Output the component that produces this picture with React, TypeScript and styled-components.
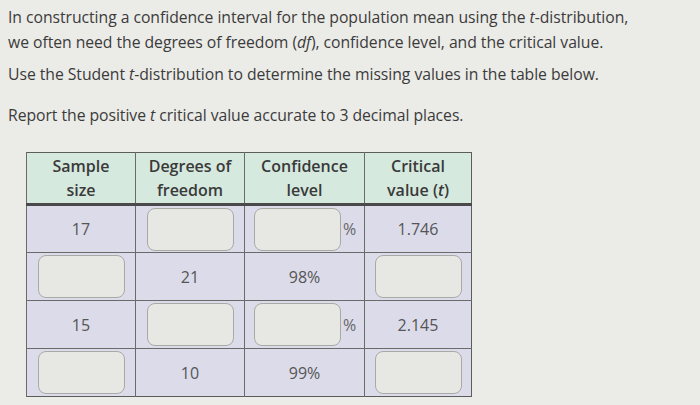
import { FC } from "react";
import styled, { createGlobalStyle } from "styled-components";

const GlobalStyle = createGlobalStyle`
  body {
    margin: 0;
    background-color: #ebebe8;
    font-family: "Open Sans", "Noto Sans", sans-serif;
    color: #3b3b3b;
  }
`;

const Wrapper = styled.div`
  width: 700px;
  height: 405px;
  padding: 5px 0 0 8px;
  box-sizing: border-box;
  overflow: hidden;
`;

const Para = styled.p<{ $gap?: number }>`
  margin: 0 0 ${(p) => p.$gap ?? 0}px 0;
  font-size: 15.75px;
  line-height: 25px;
  letter-spacing: -0.05px;
`;

const Table = styled.table`
  margin-left: 18px;
  border-collapse: collapse;
  border: 1px solid #5c5c5c;
  table-layout: fixed;
  width: 441px;
`;

const HeadCell = styled.th<{ $w: number }>`
  width: ${(p) => p.$w}px;
  height: 50px;
  padding: 0;
  background-color: #d6e9de;
  border-left: 1px solid #6a6a6a;
  border-bottom: 3px solid #4a4a4a;
  font-size: 16px;
  line-height: 24px;
  font-weight: 600;
  color: #3a3a3a;
  text-align: center;
`;

const Row = styled.tr`
  height: 48px;
`;

const Cell = styled.td`
  padding: 0;
  background-color: #dcdbea;
  border-left: 1px solid #6a6a6a;
  border-top: 1px solid #6a6a6a;
  font-size: 16px;
  color: #555;
  text-align: center;
  vertical-align: middle;
`;

const PctWrap = styled.div`
  display: flex;
  align-items: center;
  padding-left: 9px;
`;

const Pct = styled.span`
  margin-left: 2px;
  font-size: 16px;
  color: #666;
`;

const Box = styled.div`
  display: inline-block;
  width: 87px;
  height: 43px;
  box-sizing: border-box;
  border: 1px solid #a9aaa6;
  border-radius: 8px;
  background-color: #e7e8e3;
  vertical-align: middle;
`;

const App: FC = () => {
  return (
    <Wrapper>
      <GlobalStyle />
      <Para>
        In constructing a confidence interval for the population mean using the <i>t</i>-distribution,
      </Para>
      <Para $gap={7}>
        we often need the degrees of freedom (<i>df</i>), confidence level, and the critical value.
      </Para>
      <Para $gap={16}>
        Use the Student <i>t</i>-distribution to determine the missing values in the table below.
      </Para>
      <Para $gap={24}>
        Report the positive <i>t</i> critical value accurate to 3 decimal places.
      </Para>
      <Table>
        <thead>
          <tr>
            <HeadCell $w={108}>
              Sample
              <br />
              size
            </HeadCell>
            <HeadCell $w={108}>
              Degrees of
              <br />
              freedom
            </HeadCell>
            <HeadCell $w={119}>
              Confidence
              <br />
              level
            </HeadCell>
            <HeadCell $w={106}>
              Critical
              <br />
              value (<i>t</i>)
            </HeadCell>
          </tr>
        </thead>
        <tbody>
          <Row>
            <Cell>17</Cell>
            <Cell>
              <Box />
            </Cell>
            <Cell>
              <PctWrap>
                <Box />
                <Pct>%</Pct>
              </PctWrap>
            </Cell>
            <Cell>1.746</Cell>
          </Row>
          <Row>
            <Cell>
              <Box />
            </Cell>
            <Cell>21</Cell>
            <Cell>98%</Cell>
            <Cell>
              <Box />
            </Cell>
          </Row>
          <Row>
            <Cell>15</Cell>
            <Cell>
              <Box />
            </Cell>
            <Cell>
              <PctWrap>
                <Box />
                <Pct>%</Pct>
              </PctWrap>
            </Cell>
            <Cell>2.145</Cell>
          </Row>
          <Row>
            <Cell>
              <Box />
            </Cell>
            <Cell>10</Cell>
            <Cell>99%</Cell>
            <Cell>
              <Box />
            </Cell>
          </Row>
        </tbody>
      </Table>
    </Wrapper>
  );
};

export default App;
